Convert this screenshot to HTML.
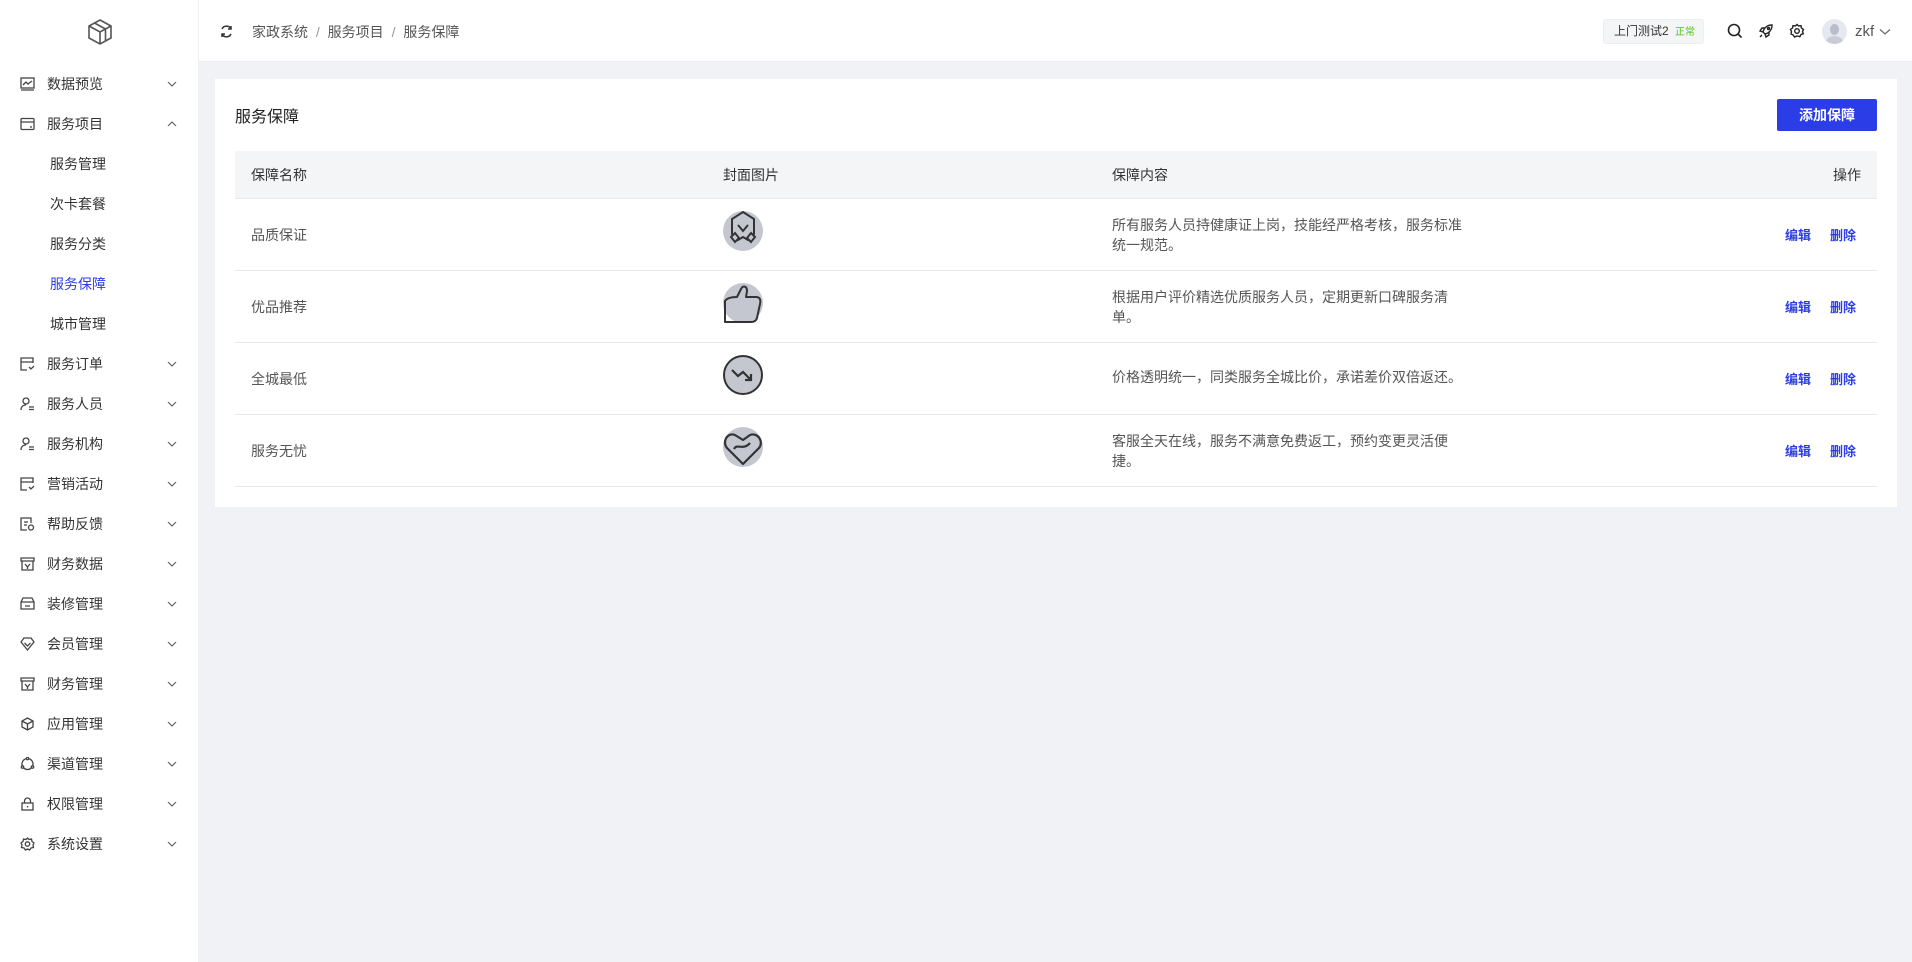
<!DOCTYPE html>
<html><head><meta charset="utf-8"><style>
*{box-sizing:border-box;margin:0;padding:0}
body{width:1912px;height:962px;background:#f0f2f5;font-family:"Liberation Sans","Noto Sans CJK SC",sans-serif;font-size:14px;color:#333;position:relative;overflow:hidden}
.side{position:absolute;left:0;top:0;width:199px;height:962px;background:#fff;border-right:1px solid #eef0f4}
.logo{position:absolute;left:86px;top:18px}
.mi{position:absolute;left:0;width:199px;height:40px;line-height:40px;font-size:14px;color:#333}
.mi svg.ic{position:absolute;left:20px;top:13px}
.mi .t{position:absolute;left:47px}
.mi .sub{position:absolute;left:50px}
.mi svg.ch{position:absolute;left:167px;top:16px}
.hdr{position:absolute;left:199px;top:0;width:1713px;height:62px;background:#fff;border-bottom:1px solid #eceef2}
.card{position:absolute;left:215px;top:79px;width:1682px;height:428px;background:#fff}
.btn{position:absolute;left:1562px;top:20px;width:100px;height:32px;background:#2b3de6;color:#fff;font-weight:bold;font-size:14px;text-align:center;line-height:32px;border-radius:2px}
.th{position:absolute;left:20px;top:72px;width:1642px;height:48px;background:#f4f5f7;border-bottom:1px solid #e8eaf0;font-size:14px;color:#333}
.row{position:absolute;left:20px;width:1642px;height:72px;border-bottom:1px solid #e8eaf0;color:#555}
.a{position:absolute}
.op{color:#2b3de6;font-weight:bold;font-size:13px}
</style></head><body>
<div class="side">
<svg class="logo" width="28" height="28" viewBox="0 0 28 28" fill="none" stroke="#555" stroke-width="1.6"><path d="M14 2 L25 8 V20 L14 26 L3 20 V8 Z M3 8 L14 14 L25 8 M14 14 V26 M8.5 5 L19.5 11 V23"/></svg>
<div class="mi" style="top:64px"><svg class="ic" width="15" height="14" viewBox="0 0 15 14" fill="none" stroke="#444" stroke-width="1.3"><rect x="1" y="1" width="13" height="10"/><path d="M3 8 L6 5 L8 7 L12 4 M1 13 H14"/></svg><span class="t">数据预览</span><svg class="ch" width="10" height="8" viewBox="0 0 10 8" fill="none" stroke="#666" stroke-width="1.2"><path d="M1 2 L5 6 L9 2"/></svg></div>
<div class="mi" style="top:104px"><svg class="ic" width="15" height="14" viewBox="0 0 15 14" fill="none" stroke="#444" stroke-width="1.3"><rect x="1" y="1.5" width="13" height="11" rx="1"/><path d="M1 5 H14 M10 10 H12"/></svg><span class="t">服务项目</span><svg class="ch" width="10" height="8" viewBox="0 0 10 8" fill="none" stroke="#666" stroke-width="1.2"><path d="M1 6 L5 2 L9 6"/></svg></div>
<div class="mi" style="top:144px"><span class="sub">服务管理</span></div>
<div class="mi" style="top:184px"><span class="sub">次卡套餐</span></div>
<div class="mi" style="top:224px"><span class="sub">服务分类</span></div>
<div class="mi" style="top:264px"><span class="sub" style="color:#2b3de6">服务保障</span></div>
<div class="mi" style="top:304px"><span class="sub">城市管理</span></div>
<div class="mi" style="top:344px"><svg class="ic" width="15" height="14" viewBox="0 0 15 14" fill="none" stroke="#444" stroke-width="1.3"><path d="M13 6 V1 H1 V13 H7 M1 5 H13 M9 10 L11 12 L14 9"/></svg><span class="t">服务订单</span><svg class="ch" width="10" height="8" viewBox="0 0 10 8" fill="none" stroke="#666" stroke-width="1.2"><path d="M1 2 L5 6 L9 2"/></svg></div>
<div class="mi" style="top:384px"><svg class="ic" width="15" height="14" viewBox="0 0 15 14" fill="none" stroke="#444" stroke-width="1.3"><circle cx="6" cy="4" r="3"/><path d="M1 13 C1 9 4 8 6 8 M9 10 H14 M9 12.5 H14"/></svg><span class="t">服务人员</span><svg class="ch" width="10" height="8" viewBox="0 0 10 8" fill="none" stroke="#666" stroke-width="1.2"><path d="M1 2 L5 6 L9 2"/></svg></div>
<div class="mi" style="top:424px"><svg class="ic" width="15" height="14" viewBox="0 0 15 14" fill="none" stroke="#444" stroke-width="1.3"><circle cx="6" cy="4" r="3"/><path d="M1 13 C1 9 4 8 6 8 M9 10 H14 M9 12.5 H14"/></svg><span class="t">服务机构</span><svg class="ch" width="10" height="8" viewBox="0 0 10 8" fill="none" stroke="#666" stroke-width="1.2"><path d="M1 2 L5 6 L9 2"/></svg></div>
<div class="mi" style="top:464px"><svg class="ic" width="15" height="14" viewBox="0 0 15 14" fill="none" stroke="#444" stroke-width="1.3"><path d="M13 6 V1 H1 V13 H7 M1 5 H13 M9 10 L11 12 L14 9"/></svg><span class="t">营销活动</span><svg class="ch" width="10" height="8" viewBox="0 0 10 8" fill="none" stroke="#666" stroke-width="1.2"><path d="M1 2 L5 6 L9 2"/></svg></div>
<div class="mi" style="top:504px"><svg class="ic" width="15" height="14" viewBox="0 0 15 14" fill="none" stroke="#444" stroke-width="1.3"><path d="M11 6 V1 H1 V13 H7 M4 5 H8 M4 8 H7"/><circle cx="11" cy="10.5" r="2.5"/></svg><span class="t">帮助反馈</span><svg class="ch" width="10" height="8" viewBox="0 0 10 8" fill="none" stroke="#666" stroke-width="1.2"><path d="M1 2 L5 6 L9 2"/></svg></div>
<div class="mi" style="top:544px"><svg class="ic" width="15" height="14" viewBox="0 0 15 14" fill="none" stroke="#444" stroke-width="1.3"><path d="M1 1 H14 V4 H1 Z M2 4 V13 H13 V4 M5 7 L7.5 10 L10 7 M7.5 10 V12"/></svg><span class="t">财务数据</span><svg class="ch" width="10" height="8" viewBox="0 0 10 8" fill="none" stroke="#666" stroke-width="1.2"><path d="M1 2 L5 6 L9 2"/></svg></div>
<div class="mi" style="top:584px"><svg class="ic" width="15" height="14" viewBox="0 0 15 14" fill="none" stroke="#444" stroke-width="1.3"><path d="M1 5 L3 1 H12 L14 5 V12 H1 Z M1 5 H14 M5 9 H10"/></svg><span class="t">装修管理</span><svg class="ch" width="10" height="8" viewBox="0 0 10 8" fill="none" stroke="#666" stroke-width="1.2"><path d="M1 2 L5 6 L9 2"/></svg></div>
<div class="mi" style="top:624px"><svg class="ic" width="15" height="14" viewBox="0 0 15 14" fill="none" stroke="#444" stroke-width="1.3"><path d="M1 5 L4 1 H11 L14 5 L7.5 13 Z M4.5 6 L7.5 9 L10.5 6"/></svg><span class="t">会员管理</span><svg class="ch" width="10" height="8" viewBox="0 0 10 8" fill="none" stroke="#666" stroke-width="1.2"><path d="M1 2 L5 6 L9 2"/></svg></div>
<div class="mi" style="top:664px"><svg class="ic" width="15" height="14" viewBox="0 0 15 14" fill="none" stroke="#444" stroke-width="1.3"><path d="M1 1 H14 V4 H1 Z M2 4 V13 H13 V4 M5 7 L7.5 10 L10 7 M7.5 10 V12"/></svg><span class="t">财务管理</span><svg class="ch" width="10" height="8" viewBox="0 0 10 8" fill="none" stroke="#666" stroke-width="1.2"><path d="M1 2 L5 6 L9 2"/></svg></div>
<div class="mi" style="top:704px"><svg class="ic" width="15" height="14" viewBox="0 0 15 14" fill="none" stroke="#444" stroke-width="1.3"><path d="M7.5 1 L13 4 V10 L7.5 13 L2 10 V4 Z M2 4 L7.5 7 L13 4 M7.5 7 V13"/></svg><span class="t">应用管理</span><svg class="ch" width="10" height="8" viewBox="0 0 10 8" fill="none" stroke="#666" stroke-width="1.2"><path d="M1 2 L5 6 L9 2"/></svg></div>
<div class="mi" style="top:744px"><svg class="ic" width="15" height="14" viewBox="0 0 15 14" fill="none" stroke="#444" stroke-width="1.3"><circle cx="7.5" cy="7" r="5.5"/><circle cx="7.5" cy="1.5" r="1.2" fill="#fff"/><circle cx="2.5" cy="10" r="1.2" fill="#fff"/><circle cx="12.5" cy="10" r="1.2" fill="#fff"/></svg><span class="t">渠道管理</span><svg class="ch" width="10" height="8" viewBox="0 0 10 8" fill="none" stroke="#666" stroke-width="1.2"><path d="M1 2 L5 6 L9 2"/></svg></div>
<div class="mi" style="top:784px"><svg class="ic" width="15" height="14" viewBox="0 0 15 14" fill="none" stroke="#444" stroke-width="1.3"><rect x="2" y="6" width="11" height="7"/><path d="M4.5 6 V4 A3 3 0 0 1 10.5 4 V6 M7.5 9 V10.5"/></svg><span class="t">权限管理</span><svg class="ch" width="10" height="8" viewBox="0 0 10 8" fill="none" stroke="#666" stroke-width="1.2"><path d="M1 2 L5 6 L9 2"/></svg></div>
<div class="mi" style="top:824px"><svg class="ic" width="15" height="14" viewBox="0 0 15 14" fill="none" stroke="#444" stroke-width="1.3"><circle cx="7.5" cy="7" r="2.2"/><path d="M7.5 1 L9 2.5 L11.5 2 L12 4.5 L14 6 L13 8 L13.5 10.5 L11 11 L9.5 13 L7.5 12 L5.5 13 L4 11 L1.5 10.5 L2 8 L1 6 L3 4.5 L3.5 2 L6 2.5 Z"/></svg><span class="t">系统设置</span><svg class="ch" width="10" height="8" viewBox="0 0 10 8" fill="none" stroke="#666" stroke-width="1.2"><path d="M1 2 L5 6 L9 2"/></svg></div>
</div>

<div class="hdr">
<svg style="position:absolute;left:21px;top:25px" width="13" height="13" viewBox="0 0 13 13" fill="none" stroke="#333" stroke-width="1.5"><path d="M11 4 A5 5 0 0 0 2 4 M2 9 A5 5 0 0 0 11 9"/><path d="M11 1 V4 H8 M2 12 V9 H5"/></svg>
<div style="position:absolute;left:53px;top:22px;color:#555;font-size:14px;word-spacing:0">家政系统 <span style="color:#999;margin:0 4px">/</span> 服务项目 <span style="color:#999;margin:0 4px">/</span> 服务保障</div>
<div style="position:absolute;left:1404px;top:19px;width:101px;height:25px;background:#f4f5f7;border:1px solid #eceef2;border-radius:3px;font-size:12px;line-height:23px;padding-left:10px;color:#333">上门测试2 <span style="color:#52c41a;font-size:10px;margin-left:3px">正常</span></div>
<svg style="position:absolute;left:1528px;top:23px" width="16" height="16" viewBox="0 0 16 16" fill="none" stroke="#222" stroke-width="1.6"><circle cx="7" cy="7" r="5.5"/><path d="M11 11 L14.5 14.5"/></svg>
<svg style="position:absolute;left:1559px;top:23px" width="16" height="16" viewBox="0 0 16 16" fill="none" stroke="#222" stroke-width="1.4"><path d="M14 2 C9 2 6 5 5 9 L7 11 C11 10 14 7 14 2 Z M5 9 L2 8 L4 5 L7 5 M7 11 L8 14 L11 12 L11 9 M4 12 L2 14"/><circle cx="10.5" cy="5.5" r="1"/></svg>
<svg style="position:absolute;left:1590px;top:23px" width="16" height="16" viewBox="0 0 16 16" fill="none" stroke="#222" stroke-width="1.4"><circle cx="8" cy="8" r="2.3"/><path d="M8 1.5 L9.6 3 L12 2.7 L12.4 5 L14.5 6.5 L13.5 8.5 L14.3 10.8 L12 11.5 L10.8 13.7 L8 13 L5.5 14 L4.2 12 L2 11 L2.5 8.5 L1.5 6.5 L3.5 5 L4 2.7 L6.3 3 Z"/></svg>
<div style="position:absolute;left:1623px;top:19px;width:25px;height:25px;border-radius:50%;background:#e6e8ef;overflow:hidden"><div style="position:absolute;left:8px;top:5px;width:9px;height:11px;border-radius:50%;background:#b8bccb"></div><div style="position:absolute;left:4px;top:17px;width:17px;height:12px;border-radius:50%;background:#c9ccd8"></div></div>
<div style="position:absolute;left:1656px;top:23px;font-size:15px;color:#555">zkf</div>
<svg style="position:absolute;left:1680px;top:28px" width="12" height="8" viewBox="0 0 12 8" fill="none" stroke="#666" stroke-width="1.2"><path d="M1 1.5 L6 6 L11 1.5"/></svg>
</div>

<div class="card">
<div class="a" style="left:20px;top:24px;font-size:16px;color:#222">服务保障</div>
<div class="btn">添加保障</div>
<div class="th"><span class="a" style="left:16px;top:14px">保障名称</span><span class="a" style="left:488px;top:14px">封面图片</span><span class="a" style="left:877px;top:14px">保障内容</span><span class="a" style="right:16px;top:14px">操作</span></div>

<div class="row" style="top:120px"><span class="a" style="left:16px;top:26px">品质保证</span>
<svg class="a" style="left:488px;top:12px" width="40" height="40" viewBox="0 0 40 40"><circle cx="20" cy="20" r="20" fill="#c4c7cf"/><path d="M20 1 L31 8 V23 L25 29 L20 26 L15 29 L9 23 V8 Z" fill="none" stroke="#333" stroke-width="2"/><path d="M15 14 L20 20 L25 14" fill="none" stroke="#333" stroke-width="2"/><path d="M8 26 L12 22 L16 27 L12 31 Z M32 26 L28 22 L24 27 L28 31 Z" fill="#c4c7cf" stroke="#333" stroke-width="2"/></svg>
<span class="a" style="left:877px;top:16px;width:362px;line-height:20px">所有服务人员持健康证上岗，技能经严格考核，服务标准统一规范。</span>
<span class="a op" style="left:1550px;top:26px">编辑</span><span class="a op" style="left:1595px;top:26px">删除</span></div>

<div class="row" style="top:192px"><span class="a" style="left:16px;top:26px">优品推荐</span>
<svg class="a" style="left:488px;top:12px" width="40" height="40" viewBox="0 0 40 40"><circle cx="20" cy="20" r="20" fill="#c4c7cf"/><path d="M2 18 C4 15 8 14 14 14 L18 6 C20 2 24 3 24 8 L23 14 L33 14 C37 14 38 17 37 21 L34 35 C33 38 31 39 28 39 L2 39 Z" fill="none" stroke="#333" stroke-width="2" stroke-linejoin="round"/></svg>
<span class="a" style="left:877px;top:16px;width:362px;line-height:20px">根据用户评价精选优质服务人员，定期更新口碑服务清单。</span>
<span class="a op" style="left:1550px;top:26px">编辑</span><span class="a op" style="left:1595px;top:26px">删除</span></div>

<div class="row" style="top:264px"><span class="a" style="left:16px;top:26px">全城最低</span>
<svg class="a" style="left:488px;top:12px" width="40" height="40" viewBox="0 0 40 40"><circle cx="20" cy="20" r="19" fill="#c4c7cf" stroke="#333" stroke-width="2"/><path d="M9 15 L15 21 L20 17 L28 25 M22 25 H28 V19" fill="none" stroke="#333" stroke-width="2.2"/></svg>
<span class="a" style="left:877px;width:400px;line-height:20px;top:24px">价格透明统一，同类服务全城比价，承诺差价双倍返还。</span>
<span class="a op" style="left:1550px;top:26px">编辑</span><span class="a op" style="left:1595px;top:26px">删除</span></div>

<div class="row" style="top:336px"><span class="a" style="left:16px;top:26px">服务无忧</span>
<svg class="a" style="left:488px;top:12px" width="40" height="40" viewBox="0 0 40 40"><circle cx="20" cy="20" r="20" fill="#c4c7cf"/><path d="M20 37 L4 21 C-1 15 4 5 12 8 L20 13 L27 8 C35 5 41 15 36 21 Z" fill="none" stroke="#333" stroke-width="2.2" stroke-linejoin="round"/><path d="M11 22 C14 16 20 24 27 16" fill="none" stroke="#333" stroke-width="2.2"/></svg>
<span class="a" style="left:877px;top:16px;width:362px;line-height:20px">客服全天在线，服务不满意免费返工，预约变更灵活便捷。</span>
<span class="a op" style="left:1550px;top:26px">编辑</span><span class="a op" style="left:1595px;top:26px">删除</span></div>
</div>
</body></html>
